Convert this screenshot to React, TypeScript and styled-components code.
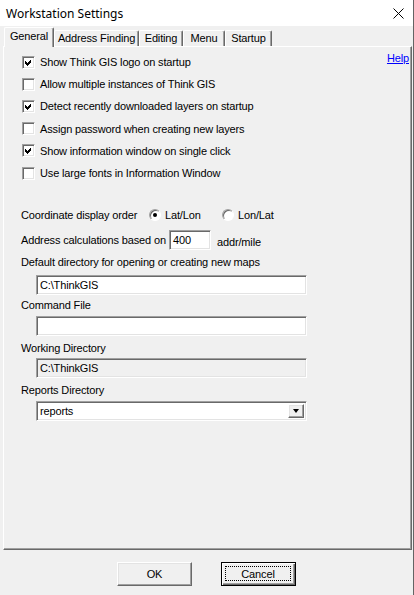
import styled, { createGlobalStyle, css } from "styled-components";

const GlobalStyle = createGlobalStyle`
  html, body {
    margin: 0;
    padding: 0;
    background: #f0f0f0;
  }
`;

const options = [
  { key: "logo", text: "Show Think GIS logo on startup", checked: true },
  { key: "multi", text: "Allow multiple instances of Think GIS", checked: false },
  { key: "detect", text: "Detect recently downloaded layers on startup", checked: true },
  { key: "password", text: "Assign password when creating new layers", checked: false },
  { key: "info", text: "Show information window on single click", checked: true },
  { key: "fonts", text: "Use large fonts in Information Window", checked: false },
];

const tabs = [
  { key: "general", text: "General", width: 50 },
  { key: "address", text: "Address Finding", width: 85 },
  { key: "editing", text: "Editing", width: 44 },
  { key: "menu", text: "Menu", width: 42 },
  { key: "startup", text: "Startup", width: 47 },
];

function CheckMark() {
  return (
    <svg width="9" height="9" viewBox="0 0 9 9" shapeRendering="crispEdges">
      <path d="M1 3 L3 5 L7 1 L7 4 L3 8 L1 6 Z" fill="#000" />
    </svg>
  );
}

function CloseIcon() {
  return (
    <svg width="11" height="11" viewBox="0 0 11 11">
      <path d="M0.5 0.5 L10.5 10.5 M10.5 0.5 L0.5 10.5" stroke="#000" strokeWidth="1" />
    </svg>
  );
}

function App() {
  return (
    <>
      <GlobalStyle />
      <Window>
        <TitleBar>
          <Title>Workstation Settings</Title>
          <CloseIcon />
        </TitleBar>

        <TabStrip>
          {tabs.map((tab, i) => (
            <Tab key={tab.key} $width={tab.width} $active={i === 0}>
              {tab.text}
            </Tab>
          ))}
        </TabStrip>

        <Panel>
          <CheckList>
            {options.map((opt, i) => (
              <CheckRow key={opt.key}>
                <CheckBox>{opt.checked && <CheckMark />}</CheckBox>
                <span>{opt.text}</span>
                {i === 0 && <HelpLink href="#">Help</HelpLink>}
              </CheckRow>
            ))}
          </CheckList>

          <InlineRow $top={21}>
            <InlineLabel $width={128}>Coordinate display order</InlineLabel>
            <RadioOption>
              <Radio $checked />
              Lat/Lon
            </RadioOption>
            <RadioOption>
              <Radio />
              Lon/Lat
            </RadioOption>
          </InlineRow>

          <InlineRow $top={5}>
            <InlineLabel $width={148}>Address calculations based on</InlineLabel>
            <TextBox $width={42}>400</TextBox>
            <Unit>addr/mile</Unit>
          </InlineRow>

          <FieldLabel $top={6}>Default directory for opening or creating new maps</FieldLabel>
          <TextBox $indent $top={6}>C:\ThinkGIS</TextBox>

          <FieldLabel $top={4}>Command File</FieldLabel>
          <TextBox $indent $top={4} />

          <FieldLabel $top={6}>Working Directory</FieldLabel>
          <TextBox $indent $top={3} $disabled>
            C:\ThinkGIS
          </TextBox>

          <FieldLabel $top={6}>Reports Directory</FieldLabel>
          <Combo>
            <ComboText>reports</ComboText>
            <ComboButton>
              <Arrow />
            </ComboButton>
          </Combo>
        </Panel>

        <Footer>
          <Button>OK</Button>
          <Button $default>
            <FocusRing>Cancel</FocusRing>
          </Button>
        </Footer>
      </Window>
    </>
  );
}

export default App;

const sunken = css`
  border-top: 1px solid #a0a0a0;
  border-left: 1px solid #a0a0a0;
  border-bottom: 1px solid #ffffff;
  border-right: 1px solid #ffffff;
  box-shadow: inset 1px 1px 0 #696969, inset -1px -1px 0 #e3e3e3;
`;

const raised = css`
  border-top: 1px solid #ffffff;
  border-left: 1px solid #ffffff;
  border-bottom: 1px solid #696969;
  border-right: 1px solid #696969;
  box-shadow: inset -1px -1px 0 #a0a0a0, inset 1px 1px 0 #e3e3e3;
`;

const Window = styled.div`
  width: 414px;
  height: 595px;
  box-sizing: border-box;
  display: flex;
  flex-direction: column;
  background: #f0f0f0;
  border-right: 1px solid #646464;
  font-family: "Liberation Sans", Arial, sans-serif;
  font-size: 11px;
  letter-spacing: -0.15px;
  color: #000;
  overflow: hidden;
`;

const TitleBar = styled.div`
  height: 26px;
  flex: none;
  background: #ffffff;
  display: flex;
  align-items: center;
  justify-content: space-between;
  padding: 0 9px 0 6px;
`;

const Title = styled.span`
  font-family: "Segoe UI", "Noto Sans", sans-serif;
  font-size: 12px;
  letter-spacing: 0;
  padding-top: 1px;
`;

const TabStrip = styled.div`
  height: 20px;
  flex: none;
  display: flex;
  align-items: flex-end;
  padding-left: 4px;
`;

const Tab = styled.div<{ $width: number; $active?: boolean }>`
  position: relative;
  box-sizing: border-box;
  width: ${(p) => p.$width}px;
  height: ${(p) => (p.$active ? 20 : 16)}px;
  margin-bottom: ${(p) => (p.$active ? -1 : 0)}px;
  z-index: ${(p) => (p.$active ? 1 : 0)};
  display: flex;
  align-items: center;
  justify-content: center;
  padding-bottom: ${(p) => (p.$active ? 3 : 1)}px;
  background: #f0f0f0;
  border-top: 1px solid #ffffff;
  border-left: 1px solid #ffffff;
  border-right: 1px solid #696969;
  border-radius: 2px 2px 0 0;
  box-shadow: inset -1px 0 0 #a0a0a0;
  white-space: nowrap;
`;

const Panel = styled.div`
  flex: 1;
  box-sizing: border-box;
  margin: 0 1px 0 3px;
  padding: 4px 2px 0 17px;
  display: flex;
  flex-direction: column;
  border-top: 1px solid #ffffff;
  border-left: 1px solid #ffffff;
  border-right: 1px solid #696969;
  border-bottom: 1px solid #696969;
  box-shadow: inset -1px -1px 0 #a0a0a0;
`;

const CheckList = styled.div`
  display: flex;
  flex-direction: column;
`;

const CheckRow = styled.div`
  height: 22.2px;
  display: flex;
  align-items: center;
  gap: 5px;
  padding-left: 1px;
`;

const CheckBox = styled.div`
  width: 13px;
  height: 13px;
  box-sizing: border-box;
  flex: none;
  background: #ffffff;
  display: flex;
  align-items: center;
  justify-content: center;
  ${sunken}
`;

const HelpLink = styled.a`
  margin-left: auto;
  align-self: flex-start;
  margin-top: 1px;
  color: #0000ff;
  text-decoration: underline;
`;

const InlineRow = styled.div<{ $top: number }>`
  height: 20px;
  margin-top: ${(p) => p.$top}px;
  display: flex;
  align-items: center;
`;

const InlineLabel = styled.span<{ $width: number }>`
  width: ${(p) => p.$width}px;
  flex: none;
  white-space: nowrap;
`;

const RadioOption = styled.label`
  width: 73px;
  display: flex;
  align-items: center;
  gap: 4px;
`;

const Radio = styled.span<{ $checked?: boolean }>`
  width: 12px;
  height: 12px;
  box-sizing: border-box;
  border-radius: 50%;
  background: #ffffff;
  border: 1px solid;
  border-color: #a0a0a0 #ffffff #ffffff #a0a0a0;
  box-shadow: inset 1px 1px 0 #696969;
  display: flex;
  align-items: center;
  justify-content: center;

  &::after {
    content: "";
    width: 4px;
    height: 4px;
    border-radius: 50%;
    background: #000;
    display: ${(p) => (p.$checked ? "block" : "none")};
  }
`;

const TextBox = styled.div<{ $width?: number; $indent?: boolean; $top?: number; $disabled?: boolean }>`
  box-sizing: border-box;
  width: ${(p) => p.$width ?? 271}px;
  height: 20px;
  flex: none;
  margin-left: ${(p) => (p.$indent ? 15 : 0)}px;
  margin-top: ${(p) => p.$top ?? 0}px;
  padding: 0 3px;
  display: flex;
  align-items: center;
  background: ${(p) => (p.$disabled ? "#f0f0f0" : "#ffffff")};
  ${sunken}
`;

const Unit = styled.span`
  margin-left: 6px;
  padding-top: 3px;
`;

const FieldLabel = styled.div<{ $top: number }>`
  height: 13px;
  line-height: 13px;
  margin-top: ${(p) => p.$top}px;
`;

const Combo = styled.div`
  box-sizing: border-box;
  width: 271px;
  height: 20px;
  margin: 4px 0 0 15px;
  padding: 2px;
  display: flex;
  align-items: stretch;
  background: #ffffff;
  ${sunken}
`;

const ComboText = styled.span`
  flex: 1;
  display: flex;
  align-items: center;
  padding-left: 1px;
`;

const ComboButton = styled.span`
  width: 16px;
  box-sizing: border-box;
  background: #f0f0f0;
  display: flex;
  align-items: center;
  justify-content: center;
  ${raised}
`;

const Arrow = styled.span`
  width: 0;
  height: 0;
  border-left: 3.5px solid transparent;
  border-right: 3.5px solid transparent;
  border-top: 4px solid #000;
`;

const Footer = styled.div`
  height: 45px;
  flex: none;
  box-sizing: border-box;
  padding: 12px 0 0 117px;
  display: flex;
  align-items: flex-start;
  gap: 29px;
`;

const Button = styled.div<{ $default?: boolean }>`
  width: 75px;
  height: 24px;
  box-sizing: border-box;
  display: flex;
  align-items: center;
  justify-content: center;
  background: #f0f0f0;
  ${(p) =>
    p.$default
      ? css`
          border: 1px solid #000;
          box-shadow: inset 1px 1px 0 #fff, inset -1px -1px 0 #696969, inset -2px -2px 0 #a0a0a0;
          padding: 2px;
        `
      : raised}
`;

const FocusRing = styled.span`
  flex: 1;
  align-self: stretch;
  display: flex;
  align-items: center;
  justify-content: center;
  margin: 1px 2px 2px 1px;
  border: 1px dotted #000;
`;
